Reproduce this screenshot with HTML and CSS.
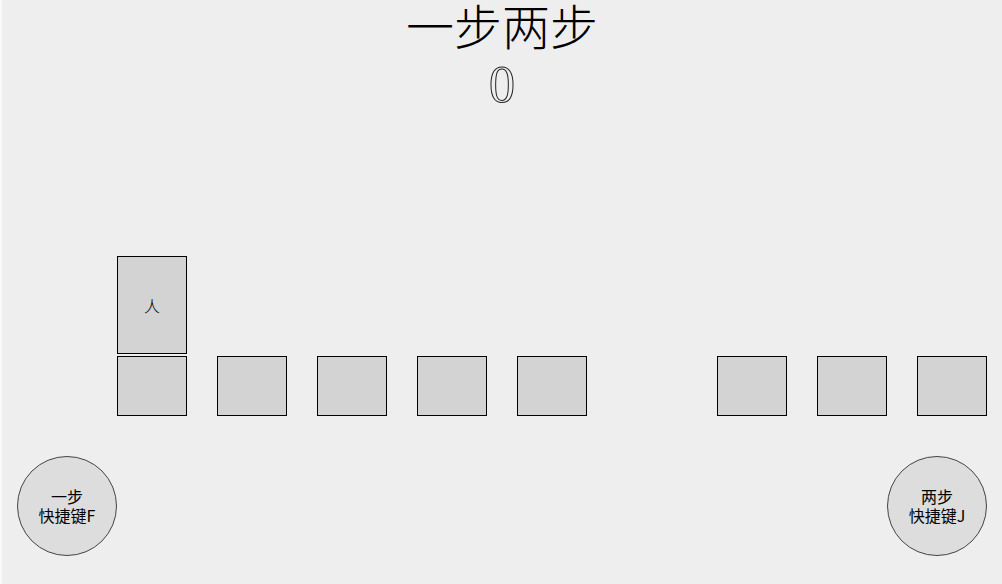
FILE: index.html
```html
<!DOCTYPE html>
<html lang="zh-CN">
<head>
<meta charset="utf-8">
<title>一步两步</title>
<link rel="stylesheet" href="styles.css">
</head>
<body>
<main class="game">
  <h1 class="title">一步两步</h1>
  <div class="score">0</div>
  <section class="stage">
    <div class="player-row">
      <div class="player">人</div>
    </div>
    <div class="track">
      <div class="cell"></div>
      <div class="cell"></div>
      <div class="cell"></div>
      <div class="cell"></div>
      <div class="cell"></div>
      <div class="cell hole"></div>
      <div class="cell"></div>
      <div class="cell"></div>
      <div class="cell"></div>
    </div>
  </section>
  <div class="controls">
    <button class="btn">一步<br>快捷键F</button>
    <button class="btn">两步<br>快捷键J</button>
  </div>
</main>
</body>
</html>
```

FILE: styles.css
```css
html {
  background: #f9f9f9;
}
body {
  margin: 0;
  margin-left: 2px;
  min-height: 584px;
  background: #eeeeee;
  color: #000;
  font-family: "Noto Sans CJK SC", sans-serif;
}
.game {
  display: flex;
  flex-direction: column;
}
.title {
  margin: 0;
  height: 55px;
  font-size: 48px;
  line-height: 49px;
  font-weight: 300;
  text-align: center;
  font-family: "Noto Sans CJK SC", serif;
}
.score {
  height: 60px;
  font-family: "Liberation Serif", serif;
  font-size: 52px;
  line-height: 60px;
  text-align: center;
  color: transparent;
  -webkit-text-stroke: 1px #222;
}
.stage {
  margin-top: 141px;
  display: flex;
  flex-direction: column;
  gap: 2px;
  padding-left: 115px;
}
.player-row {
  display: flex;
}
.player {
  box-sizing: border-box;
  width: 70px;
  height: 98px;
  border: 1px solid #000;
  background: #d3d3d3;
  display: flex;
  align-items: center;
  justify-content: center;
  font-size: 16px;
  font-weight: 300;
  color: #000;
}
.track {
  display: flex;
  gap: 30px;
}
.cell {
  box-sizing: border-box;
  width: 70px;
  height: 60px;
  border: 1px solid #000;
  background: #d3d3d3;
}
.cell.hole {
  visibility: hidden;
}
.controls {
  margin-top: 40px;
  display: flex;
  justify-content: space-between;
  padding: 0 15px;
}
.btn {
  box-sizing: border-box;
  width: 100px;
  height: 100px;
  border-radius: 50%;
  border: 1px solid #444;
  background: #dddddd;
  padding: 0;
  font-family: "Noto Sans CJK SC", sans-serif;
  font-size: 16px;
  line-height: 19px;
  color: #000;
}
```
